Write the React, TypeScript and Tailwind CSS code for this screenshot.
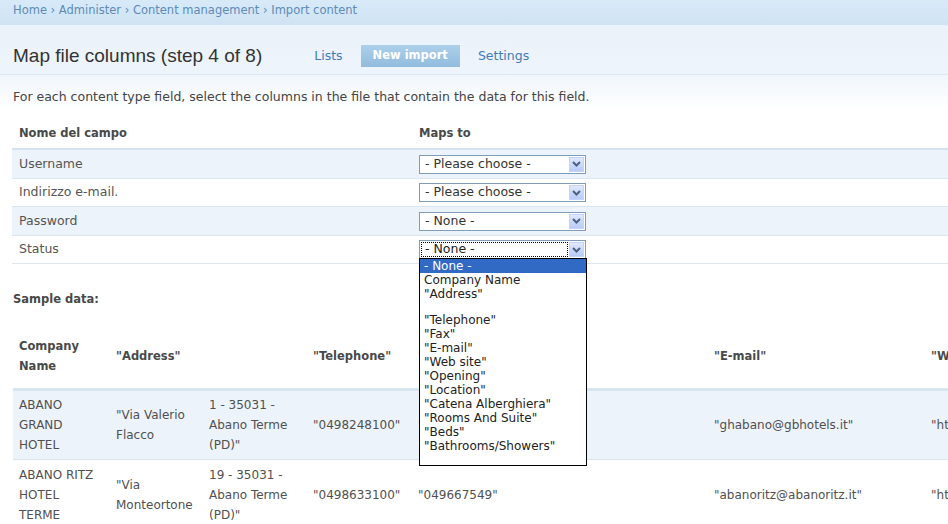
import React from "react";

function Chevron() {
  return (
    <svg width="9" height="6" viewBox="0 0 9 6" className="block">
      <path d="M1 1 L4.5 4.5 L8 1" fill="none" stroke="#4d6185" strokeWidth="2" />
    </svg>
  );
}

function Select({ label, focused }: { label: string; focused?: boolean }) {
  return (
    <div className="w-[167px] h-[19px] border border-[#7f9db9] bg-white flex items-stretch p-[1px]">
      {focused ? (
        <div className="flex-1 flex items-center pl-[3px] border border-dotted border-black text-[12.5px] leading-none text-[#222]">
          {label}
        </div>
      ) : (
        <div className="flex-1 flex items-center pl-[4px] text-[12.5px] leading-none text-[#333]">{label}</div>
      )}
      <div className="w-[15px] ml-[1px] flex items-center justify-center border border-[#c3d3fd] bg-gradient-to-b from-[#dfe8fd] to-[#b7cbf7]">
        <Chevron />
      </div>
    </div>
  );
}

const mapRows = [
  { name: "Username", value: "- Please choose -", bg: "bg-[#edf3fa]", h: "h-[29px]" },
  { name: "Indirizzo e-mail.", value: "- Please choose -", bg: "bg-white", h: "h-[28px]" },
  { name: "Password", value: "- None -", bg: "bg-[#edf3fa]", h: "h-[29px]" },
  { name: "Status", value: "- None -", bg: "bg-white", h: "h-[28px]", focused: true },
];

const options = [
  "Company Name",
  '"Address"',
  "",
  '"Telephone"',
  '"Fax"',
  '"E-mail"',
  '"Web site"',
  '"Opening"',
  '"Location"',
  '"Catena Alberghiera"',
  '"Rooms And Suite"',
  '"Beds"',
  '"Bathrooms/Showers"',
];

const cols = "grid grid-cols-[97px_93px_104px_105px_296px_217px_220px]";

function Cell({ children, bold }: { children?: React.ReactNode; bold?: boolean }) {
  return (
    <div className={bold ? "px-[6px] flex items-center font-bold text-[11.5px] leading-[20px] text-[#494949]" : "px-[6px] flex items-center text-[12px] leading-[20px] text-[#505050]"}>
      <div>{children}</div>
    </div>
  );
}

export default function App() {
  return (
    <div className="relative w-[948px] h-[524px] overflow-hidden bg-white font-['DejaVu_Sans',sans-serif] text-[#4a4a4a]">
      {/* breadcrumb */}
      <div className="h-[25px] bg-gradient-to-b from-[#d8eaf8] to-[#cfe3f4] pl-[13px] text-[11.5px] leading-[21px] text-[#5d8bb6]">
        Home › Administer › Content management › Import content
      </div>
      {/* header */}
      <div className="h-[50px] bg-gradient-to-b from-[#eaf2fa] to-[#eef4fb] border-b border-[#dfe8f1] flex items-center pt-[13px] pl-[13px]">
        <h1 className="font-['Liberation_Sans',sans-serif] text-[19px] leading-[22px] text-[#333]">Map file columns (step 4 of 8)</h1>
        <nav className="flex items-center ml-[40px] gap-[6px] text-[12.5px]">
          <span className="px-[12px] h-[22px] flex items-center text-[#3f7cb6]">Lists</span>
          <span className="px-[12px] h-[22px] flex items-center font-bold text-[11.5px] text-white bg-gradient-to-b from-[#acd0ea] to-[#92bbdd]">New import</span>
          <span className="px-[12px] h-[22px] flex items-center text-[#3f7cb6]">Settings</span>
        </nav>
      </div>
      {/* body */}
      <div className="pl-[12px] bg-gradient-to-b from-[#f0f6fc] via-white to-white bg-no-repeat bg-[length:100%_70px]">
        <div className="h-[40px] pt-[14px] pl-[1px] text-[12.5px] leading-[16px] text-[#444]">
          For each content type field, select the columns in the file that contain the data for this field.
        </div>
        {/* mapping table */}
        <div className="grid grid-cols-[401px_1fr] h-[35px] pt-[5px] items-center font-bold text-[11.5px] text-[#494949] border-b-2 border-[#d4e3ef]">
          <div className="pl-[7px]">Nome del campo</div>
          <div className="pl-[6px]">Maps to</div>
        </div>
        {mapRows.map((r) => (
          <div key={r.name} className={`grid grid-cols-[401px_1fr] items-center border-b border-[#dce6ef] ${r.bg} ${r.h}`}>
            <div className="pl-[7px] text-[12.5px] text-[#555]">{r.name}</div>
            <div className="pl-[6px]">
              <Select label={r.value} focused={r.focused} />
            </div>
          </div>
        ))}
        <div className="mt-[27px] pl-[1px] font-bold text-[11.5px] leading-[16px] text-[#494949]">Sample data:</div>
        {/* sample table */}
        <div className="mt-[14px] ml-[1px]">
          <div className={`${cols} h-[70px] pt-[2px] border-b-[3px] border-[#d5e6f0]`}>
            <Cell bold>Company<br />Name</Cell>
            <Cell bold>"Address"</Cell>
            <Cell bold></Cell>
            <Cell bold>"Telephone"</Cell>
            <Cell bold>"Fax"</Cell>
            <Cell bold>"E-mail"</Cell>
            <Cell bold>"Web site"</Cell>
          </div>
          <div className={`${cols} h-[69px] bg-[#edf3fa] border-b border-[#d9e3ec]`}>
            <Cell>ABANO<br />GRAND<br />HOTEL</Cell>
            <Cell>"Via Valerio<br />Flacco</Cell>
            <Cell>1 - 35031 -<br />Abano Terme<br />(PD)"</Cell>
            <Cell>"0498248100"</Cell>
            <Cell>"0498669249"</Cell>
            <Cell>"ghabano@gbhotels.it"</Cell>
            <Cell>"http://www.gbhotels.it"</Cell>
          </div>
          <div className={`${cols} h-[69px] bg-white`}>
            <Cell>ABANO RITZ<br />HOTEL<br />TERME</Cell>
            <Cell>"Via<br />Monteortone</Cell>
            <Cell>19 - 35031 -<br />Abano Terme<br />(PD)"</Cell>
            <Cell>"0498633100"</Cell>
            <Cell>"049667549"</Cell>
            <Cell>"abanoritz@abanoritz.it"</Cell>
            <Cell>"http://www.abanoritz.it"</Cell>
          </div>
        </div>
      </div>
      {/* open dropdown list (overlay) */}
      <div className="absolute left-[419px] top-[258px] w-[168px] h-[208px] border border-black bg-white text-[12px] leading-[14px] text-[#222]">
        <div className="bg-[#316ac5] text-white pl-[4px]">- None -</div>
        {options.map((o, i) => (
          <div key={i} className={o === "" ? "h-[12px]" : "pl-[4px] h-[14px]"}>{o}</div>
        ))}
      </div>
    </div>
  );
}
